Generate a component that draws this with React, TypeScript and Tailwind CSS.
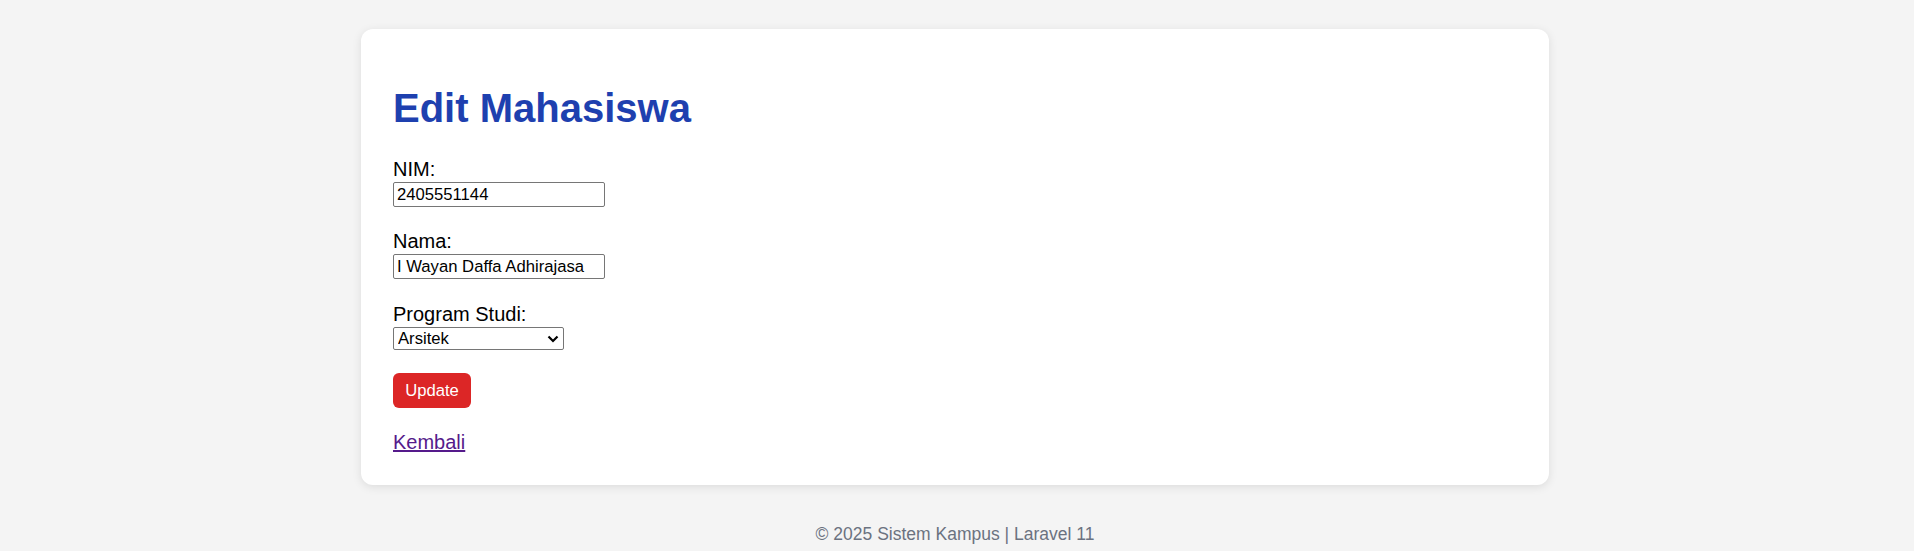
import { useState } from "react";

const PRODI = ["Arsitek", "Teknologi Informasi", "Teknik Sipil", "Teknik Elektro", "Teknik Mesin"];

export default function App() {
  const [nim, setNim] = useState("2405551144");
  const [nama, setNama] = useState("I Wayan Daffa Adhirajasa");
  const [prodi, setProdi] = useState("Arsitek");

  return (
    <div className="min-h-[551px] bg-[#f4f4f4] pt-[29px] pr-1 font-['Liberation_Sans',Arial,sans-serif] text-black">
      <div className="mx-auto w-[1188px] rounded-xl bg-white px-8 pt-8 pb-[31px] shadow-[0_2px_10px_rgba(0,0,0,0.1)]">
        <h1 className="mt-6 text-[40px] leading-[46px] font-bold text-[#1e40af]">Edit Mahasiswa</h1>

        <form onSubmit={(e) => e.preventDefault()}>
          <label className="mt-[27px] block text-[20px] leading-[23px]">NIM:</label>
          <input
            type="text"
            value={nim}
            onChange={(e) => setNim(e.target.value)}
            className="mt-px block h-[25px] w-[212px] rounded-[2px] border border-[#767676] px-[3px] text-[16.67px] leading-[19px]"
          />

          <label className="mt-[23px] block text-[20px] leading-[23px]">Nama:</label>
          <input
            type="text"
            value={nama}
            onChange={(e) => setNama(e.target.value)}
            className="mt-px block h-[25px] w-[212px] rounded-[2px] border border-[#767676] px-[3px] text-[16.67px] leading-[19px]"
          />

          <label className="mt-6 block text-[20px] leading-[23px]">Program Studi:</label>
          <div className="relative mt-px w-[171px]">
            <select
              value={prodi}
              onChange={(e) => setProdi(e.target.value)}
              className="block h-[23px] w-[171px] appearance-none rounded-[2px] border border-[#767676] bg-white pl-[4px] text-[16.67px] leading-[19px]"
            >
              {PRODI.map((p) => (
                <option key={p} value={p}>
                  {p}
                </option>
              ))}
            </select>
            <svg
              className="pointer-events-none absolute top-[8px] right-[5px]"
              width="12"
              height="8"
              viewBox="0 0 12 8"
              fill="none"
            >
              <path d="M1.5 1.5 6 6l4.5-4.5" stroke="#000" strokeWidth="2.2" />
            </svg>
          </div>

          <button
            type="submit"
            className="mt-[23px] block h-[35px] w-[78px] rounded-md bg-[#dc2626] text-[16.67px] text-white"
          >
            Update
          </button>
        </form>

        <div className="mt-[23px] text-[20px] leading-[23px]">
          <a href="#" className="text-[#551a8b] underline">
            Kembali
          </a>
        </div>
      </div>

      <footer className="mt-[39px] text-center text-[17.5px] leading-5 text-[#6b7280]">
        © 2025 Sistem Kampus | Laravel 11
      </footer>
    </div>
  );
}
